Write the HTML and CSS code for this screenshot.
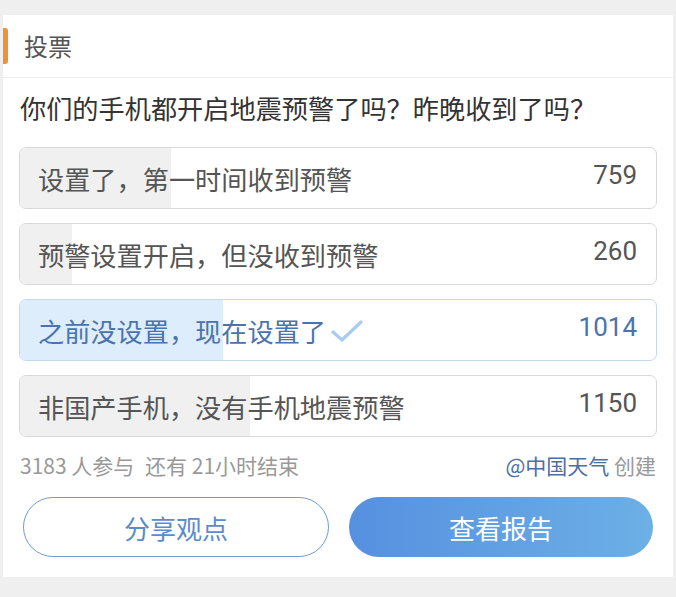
FILE: index.html
```html
<!DOCTYPE html>
<html lang="zh-CN">
<head>
    <meta charset="UTF-8">
    <meta name="viewport" content="width=device-width, initial-scale=1.0">
    <title>投票</title>
    <link rel="stylesheet" href="styles.css">
</head>
<body>
    <div class="card">
        <div class="card-head">
            <span class="mark"></span>
            <span class="title">投票</span>
        </div>
        <div class="question">你们的手机都开启地震预警了吗？昨晚收到了吗？</div>
        <div class="options">
            <div class="option">
                <div class="fill" style="width: 23.8%"></div>
                <span class="label">设置了，第一时间收到预警</span>
                <span class="count">759</span>
            </div>
            <div class="option">
                <div class="fill" style="width: 8.2%"></div>
                <span class="label">预警设置开启，但没收到预警</span>
                <span class="count">260</span>
            </div>
            <div class="option chosen">
                <div class="fill" style="width: 31.9%"></div>
                <span class="label">之前没设置，现在设置了
                    <svg class="check" width="32" height="24" viewBox="0 0 32 24"><path d="M2 13 L11 21 L30 3" fill="none" stroke="#a9cdf2" stroke-width="3.2" stroke-linecap="round" stroke-linejoin="round"/></svg>
                </span>
                <span class="count">1014</span>
            </div>
            <div class="option">
                <div class="fill" style="width: 36.1%"></div>
                <span class="label">非国产手机，没有手机地震预警</span>
                <span class="count">1150</span>
            </div>
        </div>
        <div class="meta">
            <span>3183 人参与 <span class="left-time">还有 21小时结束</span></span>
            <span><span class="author">@中国天气</span> 创建</span>
        </div>
        <div class="actions">
            <button class="btn btn-line">分享观点</button>
            <button class="btn btn-fill">查看报告</button>
        </div>
    </div>
</body>
</html>
```

FILE: styles.css
```css
body {
    margin: 0;
    background: #efefef;
    font-family: "Noto Sans CJK SC", "Noto Sans", sans-serif;
    padding: 15px 3px 21px;
}
.card {
    background: #fff;
}
.card-head {
    height: 62px;
    display: flex;
    align-items: center;
    border-bottom: 1px solid #eeeeee;
}
.mark {
    width: 5px;
    height: 36px;
    background: #f0913a;
    border-radius: 0 3px 3px 0;
    margin-right: 16px;
}
.title {
    font-size: 24px;
    line-height: 30px;
    color: #555;
}
.question {
    padding: 12px 10px 0 17px;
    height: 57px;
    font-size: 26.2px;
    line-height: 36px;
    color: #333;
    white-space: nowrap;
}
.options {
    display: flex;
    flex-direction: column;
    gap: 14px;
    padding: 0 16px;
}
.option {
    position: relative;
    height: 60px;
    border: 1px solid #d9d9d9;
    border-radius: 7px;
    overflow: hidden;
    display: flex;
    align-items: center;
    justify-content: space-between;
    padding: 0 19px 0 18px;
    color: #555;
}
.fill {
    position: absolute;
    left: 0;
    top: 0;
    bottom: 0;
    background: #f0f0f0;
}
.label, .count {
    position: relative;
}
.label {
    font-size: 26.2px;
    line-height: 32px;
    display: flex;
    align-items: center;
    padding-top: 2px;
}
.count {
    font-family: Roboto, sans-serif;
    font-size: 26px;
    line-height: 32px;
    margin-top: -6px;
}
.option.chosen {
    border-color: #c3d9ef;
    color: #4a74ad;
}
.option.chosen .fill {
    background: #deedfb;
}
.check {
    margin-left: 5px;
}
.meta {
    display: flex;
    justify-content: space-between;
    padding: 15px 17px 0 17px;
    font-size: 21px;
    color: #999;
    line-height: 26px;
}
.left-time {
    margin-left: 6px;
}
.author {
    color: #4a6fa5;
}
.actions {
    display: flex;
    gap: 20px;
    padding: 19px 20px 20px 20px;
}
.btn {
    flex: 1;
    height: 60px;
    border-radius: 30px;
    font-family: inherit;
    font-size: 26px;
    cursor: pointer;
}
.btn-line {
    background: #fff;
    border: 1px solid #6e9bd0;
    color: #5b8ccb;
}
.btn-fill {
    border: none;
    color: #fff;
    background: linear-gradient(90deg, #5690e0, #6cb0e6);
}
```
